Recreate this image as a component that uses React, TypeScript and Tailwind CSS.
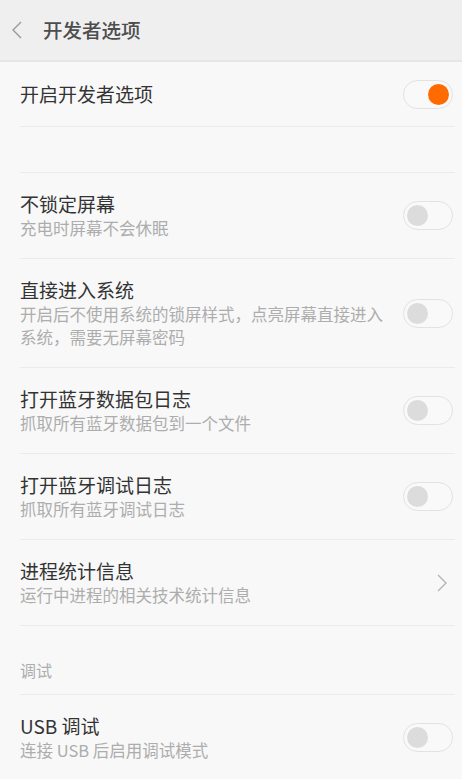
import React from 'react';

type Item = {
  title: string;
  desc?: string;
  kind: 'switch' | 'link';
  on?: boolean;
};

const items: Item[] = [
  { title: '不锁定屏幕', desc: '充电时屏幕不会休眠', kind: 'switch' },
  {
    title: '直接进入系统',
    desc: '开启后不使用系统的锁屏样式，点亮屏幕直接进入系统，需要无屏幕密码',
    kind: 'switch',
  },
  { title: '打开蓝牙数据包日志', desc: '抓取所有蓝牙数据包到一个文件', kind: 'switch' },
  { title: '打开蓝牙调试日志', desc: '抓取所有蓝牙调试日志', kind: 'switch' },
  { title: '进程统计信息', desc: '运行中进程的相关技术统计信息', kind: 'link' },
];

function Toggle({ on }: { on?: boolean }) {
  return (
    <div
      className={`flex h-[29px] w-[50px] shrink-0 items-center rounded-full border border-[#e2e2e2] bg-[#f9f9f9] px-[3px] ${
        on ? 'justify-end' : 'justify-start'
      }`}
    >
      <div className={`h-[21px] w-[21px] rounded-full ${on ? 'bg-[#ff6b00]' : 'bg-[#dcdcdc]'}`} />
    </div>
  );
}

function Chevron() {
  return (
    <svg width="10" height="18" viewBox="0 0 10 18" className="mr-[6px] shrink-0">
      <path d="M1 1l8 8-8 8" fill="none" stroke="#b5b5b5" strokeWidth="1.4" />
    </svg>
  );
}

function Divider() {
  return <div className="ml-5 mr-[7px] h-px bg-[#ebebeb]" />;
}

function Row({ item }: { item: Item }) {
  return (
    <>
      <div className="flex items-center pl-5 pr-[9px] pt-[18px] pb-[18px]">
        <div className="w-[368px] flex-1 pr-4">
          <div className="text-[19px] leading-[26px] text-[#333333]">{item.title}</div>
          {item.desc && (
            <div className="max-w-[368px] text-[16.5px] leading-[23px] text-[#adadad]">{item.desc}</div>
          )}
        </div>
        {item.kind === 'switch' ? <Toggle on={item.on} /> : <Chevron />}
      </div>
      <Divider />
    </>
  );
}

export default function App() {
  return (
    <div
      className="min-h-[779px] w-[462px] overflow-hidden bg-[#f8f8f8]"
      style={{ fontFamily: '"Noto Sans CJK SC", "Noto Sans", sans-serif' }}
    >
      {/* Title bar */}
      <div className="flex h-[62px] items-center border-b-2 border-[#e6e6e6] bg-[#efefef]">
        <svg width="12" height="18" viewBox="0 0 12 18" className="ml-[11px]">
          <path d="M10 1L2 9l8 8" fill="none" stroke="#9a9a9a" strokeWidth="1.4" />
        </svg>
        <span className="ml-[20px] text-[19.5px] font-medium text-[#4d4d4d]">开发者选项</span>
      </div>

      {/* Master switch */}
      <div className="flex h-[64px] items-center pl-5 pr-[9px]">
        <div className="flex-1 text-[19px] text-[#333333]">开启开发者选项</div>
        <Toggle on />
      </div>
      <Divider />
      <div className="h-[45px]" />
      <Divider />

      {items.map((item) => (
        <Row key={item.title} item={item} />
      ))}

      {/* Section header */}
      <div className="flex h-[68px] items-end pb-[12px] pl-5 text-[16px] text-[#adadad]">调试</div>
      <Divider />
      <Row item={{ title: 'USB 调试', desc: '连接 USB 后启用调试模式', kind: 'switch' }} />
    </div>
  );
}
